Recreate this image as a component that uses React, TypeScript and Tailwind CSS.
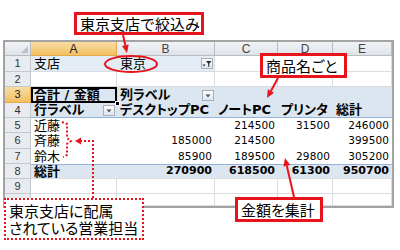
import React from "react";

const W = ["w-[26px]", "w-[86px]", "w-[98px]", "w-[63px]", "w-[55px]", "w-[59px]"];
const CELL = "font-['DejaVu_Sans','Noto_Sans_CJK_JP',sans-serif] [font-feature-settings:'palt']";
const NOTE = "font-['Noto_Sans_CJK_JP',sans-serif] text-[15px] leading-[16px] text-black";
const PALT = "[font-feature-settings:'palt']";
const GRID = "border-r border-b border-[#dadcdd]";
const BLUE = "bg-[#dce6f1]";

function DropBtn({ filter }: { filter?: boolean }) {
  return (
    <div className="w-[12px] h-[11px] shrink-0 border border-[#a7b0bc] bg-linear-to-b from-[#fbfcfd] to-[#e1e6ec] flex items-center justify-center">
      <svg width="10" height="9" viewBox="0 0 10 9">
        {filter ? (
          <>
            <path d="M0.5 5.5h3l-1.5 2z" fill="#333" />
            <path d="M4 2h5.5l-2.2 2.6v3.2h-1.1v-3.2z" fill="#222" />
          </>
        ) : (
          <path d="M2.5 3.5h5l-2.5 3z" fill="#555" />
        )}
      </svg>
    </div>
  );
}

function Cell({ c, className = "", children }: { c: number; className?: string; children?: React.ReactNode }) {
  return (
    <div className={`${W[c]} shrink-0 flex items-center px-[3px] whitespace-nowrap overflow-hidden ${className}`}>
      {children}
    </div>
  );
}

function Row({ n, h, sel, children }: { n?: number; h: string; sel?: boolean; children?: React.ReactNode }) {
  return (
    <div className={`flex ${h}`}>
      <div
        className={`${W[0]} shrink-0 flex items-center justify-center border-b border-r text-[11px] font-['Liberation_Sans',sans-serif] ${
          sel
            ? "bg-linear-to-b from-[#f9dca4] to-[#f1c15f] border-[#e4a94a] text-[#222]"
            : "bg-[#e8ebef] border-[#c3c8cf] text-[#333]"
        }`}
      >
        {n}
      </div>
      {children}
    </div>
  );
}

function Empty() {
  return (
    <>
      {[1, 2, 3, 4, 5].map((c) => (
        <Cell key={c} c={c} className={GRID} />
      ))}
    </>
  );
}

function Sheet() {
  const num = "justify-end text-[10.5px] tracking-[0.1px]";
  const tot = "justify-end text-[11px] font-bold";
  const totRow = "border-t border-b border-t-[#95b3d7] border-b-[#dadcdd]";
  return (
    <div className={`w-[391px] h-[168px] border-2 border-[#a3a3a3] overflow-hidden bg-white text-black ${CELL}`}>
      <div className="flex h-[14px]">
        <div className="w-[26px] shrink-0 border-r border-b border-[#b6bcc6] bg-linear-to-b from-[#f1f3f6] to-[#dfe3e8] flex items-end justify-end p-[2px]">
          <svg width="7" height="7" viewBox="0 0 7 7">
            <path d="M7 0v7H0z" fill="#b9c0c8" />
          </svg>
        </div>
        {["A", "B", "C", "D", "E"].map((l, i) => (
          <div
            key={l}
            className={`${W[i + 1]} shrink-0 flex items-center justify-center border-r border-b text-[12px] font-['Liberation_Sans',sans-serif] ${
              i === 0
                ? "bg-linear-to-b from-[#f9dca4] to-[#f1c15f] border-[#e4a94a] text-[#222]"
                : "bg-linear-to-b from-[#f1f3f6] to-[#dfe3e8] border-[#b6bcc6] text-[#444]"
            }`}
          >
            {l}
          </div>
        ))}
      </div>

      <Row n={1} h="h-[16px]">
        <Cell c={1} className="bg-[#e4ecf6] text-[13px] border-b border-[#dadcdd]">支店</Cell>
        <Cell c={2} className="bg-[#e4ecf6] text-[13px] justify-between pr-[1px] border-b border-r border-[#dadcdd]">
          <span>東京</span>
          <DropBtn filter />
        </Cell>
        <Cell c={3} className={GRID} />
        <Cell c={4} className={GRID} />
        <Cell c={5} className={GRID} />
      </Row>
      <Row n={2} h="h-[15px]">
        <Empty />
      </Row>
      <Row n={3} h="h-[16px]" sel>
        <Cell c={1} className={`${BLUE} text-[13px] font-bold relative overflow-visible`}>
          <span>合計&nbsp;/&nbsp;金額</span>
          <div className="absolute inset-0 border-2 border-black" />
          <div className="absolute right-[-3px] bottom-[-3px] w-[5px] h-[5px] bg-black border border-white" />
        </Cell>
        <Cell c={2} className={`${BLUE} text-[13px] font-bold justify-between pr-[1px]`}>
          <span>列ラベル</span>
          <DropBtn />
        </Cell>
        <Cell c={3} className={BLUE} />
        <Cell c={4} className={BLUE} />
        <Cell c={5} className={BLUE} />
      </Row>
      <Row n={4} h="h-[15px]">
        <Cell c={1} className={`${BLUE} text-[13px] font-bold justify-between pr-[2px] border-b border-[#95b3d7]`}>
          <span>行ラベル</span>
          <DropBtn />
        </Cell>
        <Cell c={2} className={`${BLUE} text-[13px] font-bold border-b border-[#95b3d7]`}>デスクトップPC</Cell>
        <Cell c={3} className={`${BLUE} text-[13px] font-bold border-b border-[#95b3d7]`}>ノートPC</Cell>
        <Cell c={4} className={`${BLUE} text-[13px] font-bold border-b border-[#95b3d7]`}>プリンタ</Cell>
        <Cell c={5} className={`${BLUE} text-[13px] font-bold border-b border-[#95b3d7]`}>総計</Cell>
      </Row>
      <Row n={5} h="h-[15px]">
        <Cell c={1} className="text-[13px]">近藤</Cell>
        <Cell c={2} className={num} />
        <Cell c={3} className={num}>214500</Cell>
        <Cell c={4} className={num}>31500</Cell>
        <Cell c={5} className={num}>246000</Cell>
      </Row>
      <Row n={6} h="h-[16px]">
        <Cell c={1} className="text-[13px]">斉藤</Cell>
        <Cell c={2} className={num}>185000</Cell>
        <Cell c={3} className={num}>214500</Cell>
        <Cell c={4} className={num} />
        <Cell c={5} className={num}>399500</Cell>
      </Row>
      <Row n={7} h="h-[15px]">
        <Cell c={1} className="text-[13px]">鈴木</Cell>
        <Cell c={2} className={num}>85900</Cell>
        <Cell c={3} className={num}>189500</Cell>
        <Cell c={4} className={num}>29800</Cell>
        <Cell c={5} className={num}>305200</Cell>
      </Row>
      <Row n={8} h="h-[15px]">
        <Cell c={1} className={`${BLUE} text-[13px] font-bold ${totRow}`}>総計</Cell>
        <Cell c={2} className={`${BLUE} ${tot} ${totRow}`}>270900</Cell>
        <Cell c={3} className={`${BLUE} ${tot} ${totRow}`}>618500</Cell>
        <Cell c={4} className={`${BLUE} ${tot} ${totRow}`}>61300</Cell>
        <Cell c={5} className={`${BLUE} ${tot} ${totRow}`}>950700</Cell>
      </Row>
      <Row n={9} h="h-[15px]">
        <Empty />
      </Row>
      {/* row 10 sits under the dotted callout; its number is hidden */}
      <Row h="h-[12px]">
        <Empty />
      </Row>
    </div>
  );
}

export default function App() {
  const red = "#e8141c";
  return (
    <div className="relative w-[400px] h-[250px] bg-white overflow-hidden pt-[40px] pl-[3px]">
      <Sheet />

      {/* callouts */}
      <svg className="absolute inset-0 pointer-events-none" width="400" height="250">
        <ellipse cx="131" cy="64" rx="26" ry="8" fill="none" stroke={red} strokeWidth="2" />
        <line x1="123" y1="35" x2="125.3" y2="45.2" stroke={red} strokeWidth="2" />
        <polygon points="127,53 121.9,46 128.7,44.4" fill={red} />
        <line x1="278" y1="78" x2="270.9" y2="91" stroke={red} strokeWidth="2" />
        <polygon points="267,98 267.8,89.3 274,92.7" fill={red} />
        <line x1="294" y1="197" x2="286.8" y2="165.8" stroke={red} strokeWidth="2" />
        <polygon points="285,158 290.2,165 283.4,166.6" fill={red} />
        <polyline
          points="62,122 67,124 67,138 71,141 67,144 67,155 63,157"
          fill="none"
          stroke={red}
          strokeWidth="2"
          strokeDasharray="2 2"
        />
        <polyline points="93,198 93,141 81,141" fill="none" stroke={red} strokeWidth="2" strokeDasharray="2 2" />
        <polygon points="75,141 81,137.5 81,144.5" fill={red} />
      </svg>

      <div className={`absolute left-[74px] top-[12px] w-[130px] h-[23px] border-[3px] border-[#e8141c] bg-white flex items-center pl-[3px] ${NOTE}`}>
        東京支店で絞込み
      </div>
      <div className={`absolute left-[260px] top-[53px] w-[87px] h-[25px] border-[3px] border-[#e8141c] bg-white flex items-center pl-[3px] ${NOTE} ${PALT}`}>
        商品名ごと
      </div>
      <div className={`absolute left-[235px] top-[197px] w-[88px] h-[25px] border-[3px] border-[#e8141c] bg-white flex items-center pl-[3px] ${NOTE} ${PALT}`}>
        金額を集計
      </div>
      <div className={`absolute left-[4px] top-[198px] w-[140px] h-[42px] border-2 border-dotted border-[#e8141c] bg-white flex flex-col justify-center gap-[1px] pl-[3px] ${NOTE} ${PALT}`}>
        <span className="leading-[16px]">東京支店に配属</span>
        <span className="leading-[16px]">されている営業担当</span>
      </div>
    </div>
  );
}
